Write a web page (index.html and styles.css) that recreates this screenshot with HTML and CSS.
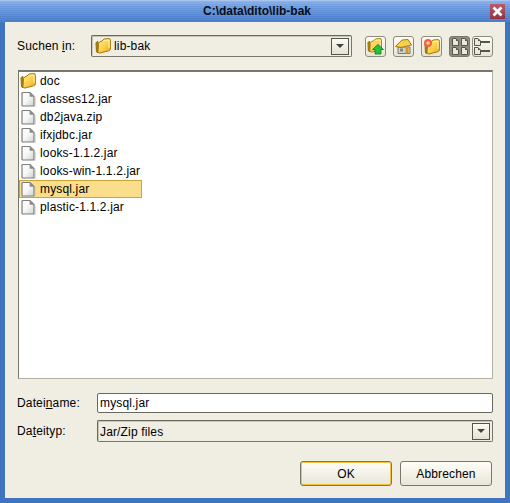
FILE: index.html
```html
<!DOCTYPE html>
<html lang="de">
<head>
    <meta charset="UTF-8">
    <title>C:\data\dito\lib-bak</title>
    <link rel="stylesheet" href="styles.css">
</head>
<body>
    <svg class="defs" width="0" height="0">
        <defs>
            <linearGradient id="folder-fill" x1="0" y1="0" x2="1" y2="1">
                <stop offset="0" stop-color="#ffeb94"/>
                <stop offset="0.5" stop-color="#fbd250"/>
                <stop offset="1" stop-color="#e8a818"/>
            </linearGradient>
            <linearGradient id="file-fill" x1="0" y1="0" x2="1" y2="1">
                <stop offset="0" stop-color="#ffffff"/>
                <stop offset="0.5" stop-color="#f6f6f6"/>
                <stop offset="1" stop-color="#cfcfcf"/>
            </linearGradient>
            <symbol id="folder" viewBox="0 0 16 16">
                <path d="M1 5 Q1 4 3 3.6 L3 14.5 Q1.6 14.6 1.4 13 Z" fill="#c08e10" stroke="#8f6a08" stroke-width="1"/>
                <path d="M3.5 5.5 Q4.5 3.4 7 3 L9 1 L14 0.6 Q15.4 0.8 15.4 2.2 L15.4 11 Q15.2 12.4 13.6 12.8 L5 15 Q3.2 15.2 3 13.4 Z" fill="url(#folder-fill)" stroke="#a87808" stroke-width="1"/>
                <path d="M9.5 2.5 L14 2 L14 10" stroke="#fff3b8" stroke-width="1" fill="none"/>
            </symbol>
            <symbol id="file" viewBox="0 0 16 16">
                <path d="M3 1.5 L10 1.5 L14 5.5 L14 14 Q14 15 13 15 L3 15 Q2 15 2 14 L2 2.5 Q2 1.5 3 1.5 Z" fill="url(#file-fill)" stroke="#7e7e7e" stroke-width="1.2"/>
                <path d="M9.6 1.5 L9.6 5.8 L14 5.8 Z" fill="#8a8a8a"/>
                <path d="M15 6.5 L15 15 Q15 16 14 16 L4 16" fill="none" stroke="#bcbcbc" stroke-width="1"/>
            </symbol>
            <symbol id="mini-file" viewBox="0 0 7 8">
                <path d="M0.5 0.5 H4 L6.5 3 V7.5 H0.5 Z" fill="#e8e8e0" stroke="#55554c" stroke-width="1"/>
                <path d="M4 0.5 V3 H6.5 Z" fill="#55554c"/>
            </symbol>
        </defs>
    </svg>

    <div class="window">
        <div class="titlebar">
            <span class="title">C:\data\dito\lib-bak</span>
            <button class="close-btn" type="button" aria-label="Schließen">
                <svg width="11" height="11" viewBox="0 0 11 11"><path d="M1.5 1.5 L9.5 9.5 M9.5 1.5 L1.5 9.5" stroke="#fff" stroke-width="2.8"/></svg>
            </button>
        </div>
        <div class="dialog">
            <div class="top-row">
                <label class="top-label">Suchen <u>i</u>n:</label>
                <div class="combo combo-dir">
                    <svg class="icon"><use href="#folder"/></svg>
                    <span>lib-bak</span>
                    <span class="arrow-btn"><i class="arrow"></i></span>
                </div>
                <div class="tools">
                    <button class="tool" type="button" aria-label="Aufwärts">
                        <svg width="17" height="17" viewBox="0 0 17 17">
                            <use href="#folder" width="15" height="15"/>
                            <path d="M11 6.5 L16.5 11.5 H14 V16 H8 V11.5 H5.5 Z" fill="#22c23a" stroke="#0f7a20" stroke-width="0.8"/>
                        </svg>
                    </button>
                    <button class="tool" type="button" aria-label="Home">
                        <svg width="17" height="17" viewBox="0 0 17 17">
                            <path d="M3 9 H15 V15.5 H3 Z" fill="#d4d4cc" stroke="#77776c"/>
                            <path d="M0.5 8.5 L7 2 L13 1.5 L16.5 7 L6 9.5 Z" fill="#f8cf50" stroke="#a87808"/>
                            <path d="M10.5 10 H13.5 V15.5 H10.5 Z" fill="#d99a18"/>
                            <path d="M5 10.5 H8 V13.5 H5 Z" fill="#86867c"/>
                        </svg>
                    </button>
                    <button class="tool" type="button" aria-label="Neuer Ordner">
                        <svg width="17" height="17" viewBox="0 0 17 17">
                            <use href="#folder" x="1" y="1" width="16" height="16"/>
                            <circle cx="5" cy="5" r="4" fill="#f2604a"/>
                            <circle cx="5" cy="5" r="1.8" fill="#ffd27a"/>
                        </svg>
                    </button>
                    <div class="view-group">
                        <button class="tool tool-on" type="button" aria-label="Liste">
                            <svg width="17" height="17" viewBox="0 0 17 17">
                                <use href="#mini-file" x="1" y="0" width="7" height="8"/>
                                <use href="#mini-file" x="10" y="0" width="7" height="8"/>
                                <use href="#mini-file" x="1" y="9" width="7" height="8"/>
                                <use href="#mini-file" x="10" y="9" width="7" height="8"/>
                            </svg>
                        </button>
                        <button class="tool" type="button" aria-label="Details">
                            <svg width="17" height="17" viewBox="0 0 17 17">
                                <use href="#mini-file" x="0" y="0" width="7" height="8"/>
                                <use href="#mini-file" x="0" y="9" width="7" height="8"/>
                                <path d="M7 4 H16 M7 13 H16" stroke="#55554c" stroke-width="2"/>
                            </svg>
                        </button>
                    </div>
                </div>
            </div>

            <div class="file-list">
                <div class="file-row"><svg class="icon"><use href="#folder"/></svg><span>doc</span></div>
                <div class="file-row"><svg class="icon"><use href="#file"/></svg><span>classes12.jar</span></div>
                <div class="file-row"><svg class="icon"><use href="#file"/></svg><span>db2java.zip</span></div>
                <div class="file-row"><svg class="icon"><use href="#file"/></svg><span>ifxjdbc.jar</span></div>
                <div class="file-row"><svg class="icon"><use href="#file"/></svg><span>looks-1.1.2.jar</span></div>
                <div class="file-row"><svg class="icon"><use href="#file"/></svg><span>looks-win-1.1.2.jar</span></div>
                <div class="file-row selected"><svg class="icon"><use href="#file"/></svg><span>mysql.jar</span></div>
                <div class="file-row"><svg class="icon"><use href="#file"/></svg><span>plastic-1.1.2.jar</span></div>
            </div>

            <div class="form-group">
                <label class="form-label" for="filename">Datei<u>n</u>ame:</label>
                <input class="text-input" id="filename" type="text" value="mysql.jar">
            </div>
            <div class="form-group form-group-type">
                <label class="form-label">Da<u>t</u>eityp:</label>
                <div class="combo combo-type">
                    <span class="combo-value">Jar/Zip files</span>
                    <span class="arrow-btn"><i class="arrow"></i></span>
                </div>
            </div>

            <div class="buttons">
                <button class="btn btn-default" type="button">OK</button>
                <button class="btn" type="button">Abbrechen</button>
            </div>
        </div>
    </div>
</body>
</html>
```

FILE: styles.css
```css
html, body {
    margin: 0;
    padding: 0;
}

body {
    font-family: "Liberation Sans", Arial, sans-serif;
    font-size: 12px;
    letter-spacing: 0.15px;
    color: #000;
    background-color: #f0eee2;
}

.defs {
    display: block;
    height: 0;
}

.window {
    width: 510px;
    height: 503px;
    display: flex;
    flex-direction: column;
    box-sizing: border-box;
}

.titlebar {
    height: 22px;
    flex: none;
    display: flex;
    align-items: center;
    justify-content: center;
    position: relative;
    padding-left: 4px;
    background-color: #4a7fc8;
    background-image:
        repeating-linear-gradient(0deg, rgba(255, 255, 255, 0.07) 0 1px, transparent 1px 2px),
        linear-gradient(#8fb3e6, #6c9ade 30%, #4478c6);
    box-shadow: inset 0 1px 0 #a9c4ee;
}

.title {
    font-weight: bold;
    letter-spacing: 0;
    color: #0a0d14;
}

.close-btn {
    position: absolute;
    top: 4px;
    right: 5px;
    width: 15px;
    height: 15px;
    padding: 0;
    display: flex;
    align-items: center;
    justify-content: center;
    background: linear-gradient(#bd5a68, #8f3344);
    border: none;
}

.dialog {
    flex: 1;
    min-height: 0;
    display: flex;
    flex-direction: column;
    border-left: 5px solid #3f75c0;
    border-right: 5px solid #3f75c0;
    border-bottom: 5px solid #3f75c0;
    padding: 13px 12px 0 12px;
}

.top-row {
    display: flex;
    align-items: center;
    height: 22px;
}

.top-label {
    width: 74px;
    flex: none;
}

.combo {
    display: flex;
    align-items: center;
    box-sizing: border-box;
    border: 1px solid #77776c;
    border-top-color: #68685c;
    border-left-color: #68685c;
    border-radius: 2px;
    box-shadow: inset 1px 1px 0 #c8c6b8;
    background-color: #f0eee2;
}

.combo-dir {
    width: 261px;
    height: 22px;
    padding-left: 3px;
    gap: 3px;
}

.combo-type {
    flex: 1;
    height: 22px;
    padding-left: 2px;
}

.combo-value {
    padding-top: 1px;
}

.arrow-btn {
    margin-left: auto;
    margin-right: 2px;
    width: 18px;
    height: 17px;
    box-sizing: border-box;
    display: flex;
    align-items: center;
    justify-content: center;
    border: 1px solid #55554c;
    background: linear-gradient(#fbfaf4, #e4e2d4);
}

.arrow {
    width: 0;
    height: 0;
    border-left: 4px solid transparent;
    border-right: 4px solid transparent;
    border-top: 4px solid #44443c;
}

.icon {
    width: 16px;
    height: 16px;
    flex: none;
}

.tools {
    display: flex;
    gap: 7px;
    margin-left: 13px;
}

.view-group {
    display: flex;
    gap: 2px;
}

.tool {
    width: 21px;
    height: 21px;
    padding: 0;
    display: flex;
    align-items: center;
    justify-content: center;
    border: 1px solid #8c8c7e;
    border-radius: 3px;
    background: linear-gradient(#fdfcf6, #e6e4d6);
}

.tool-on {
    background: #8f8d7d;
    border-color: #77776c;
}

.file-list {
    height: 309px;
    flex: none;
    margin-top: 13px;
    margin-left: 1px;
    box-sizing: border-box;
    background-color: #fff;
    border: 1px solid #b4b2a2;
    border-top: 2px solid #77776c;
    border-left: 1px solid #77776c;
}

.file-row {
    display: flex;
    align-items: center;
    gap: 4px;
    width: max-content;
    height: 18px;
    box-sizing: border-box;
    padding-left: 1px;
}

.file-row.selected {
    width: 123px;
    background-color: #fbde8c;
    outline: 1px solid #c9a437;
    outline-offset: -1px;
}

.form-group {
    display: flex;
    align-items: center;
    margin-top: 14px;
}

.form-group-type {
    margin-top: 7px;
}

.form-label {
    width: 80px;
    flex: none;
}

.text-input {
    flex: 1;
    min-width: 0;
    height: 20px;
    box-sizing: border-box;
    padding: 0 2px;
    font-family: inherit;
    font-size: 12px;
    letter-spacing: inherit;
    background-color: #fff;
    border: 1px solid #68685c;
    border-radius: 2px;
    outline: none;
}

.buttons {
    display: flex;
    justify-content: flex-end;
    gap: 8px;
    margin-top: 19px;
    padding-right: 1px;
}

.btn {
    width: 92px;
    height: 25px;
    padding: 0;
    font-family: inherit;
    font-size: 12px;
    letter-spacing: inherit;
    color: #000;
    border: 1px solid #77776c;
    border-radius: 3px;
    background: linear-gradient(#fefdf8, #e8e6d8);
}

.btn-default {
    border-color: #77776c;
    box-shadow: inset 0 0 0 1px #f2c23e;
}
```
